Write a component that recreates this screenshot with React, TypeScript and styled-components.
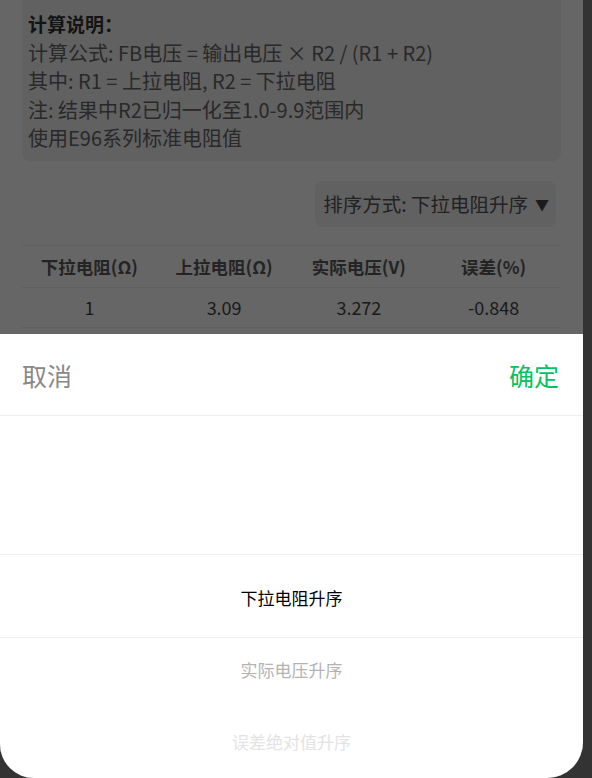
import React from "react";
import styled, { createGlobalStyle } from "styled-components";

const GlobalStyle = createGlobalStyle`
  html, body {
    margin: 0;
    padding: 0;
    background: #333;
  }
  body {
    font-family: "Noto Sans CJK SC", "Noto Sans", "Liberation Sans", sans-serif;
  }
  * {
    box-sizing: border-box;
  }
`;

const notes = [
  "计算公式: FB电压 = 输出电压 × R2 / (R1 + R2)",
  "其中: R1 = 上拉电阻, R2 = 下拉电阻",
  "注: 结果中R2已归一化至1.0-9.9范围内",
  "使用E96系列标准电阻值",
];

const columns = ["下拉电阻(Ω)", "上拉电阻(Ω)", "实际电压(V)", "误差(%)"];
const rows = [
  ["1", "3.09", "3.272", "-0.848"],
  ["1.02", "3.16", "3.284", "-0.485"],
];

const options = ["下拉电阻升序", "实际电压升序", "误差绝对值升序"];

export default function App() {
  return (
    <>
      <GlobalStyle />
      <Frame>
        {/* страница прокручена на несколько пикселей */}
        <Page>
          <InfoBox>
            <InfoTitle>计算说明：</InfoTitle>
            {notes.map((n) => (
              <InfoLine key={n}>{n}</InfoLine>
            ))}
          </InfoBox>

          <SortRow>
            <SortButton>
              排序方式: 下拉电阻升序 <Caret>▼</Caret>
            </SortButton>
          </SortRow>

          <Table>
            <HeadRow>
              {columns.map((c) => (
                <HeadCell key={c}>{c}</HeadCell>
              ))}
            </HeadRow>
            {rows.map((r, i) => (
              <Row key={i}>
                {r.map((v, j) => (
                  <Cell key={j}>{v}</Cell>
                ))}
              </Row>
            ))}
          </Table>
        </Page>

        <Mask />

        <Sheet>
          <SheetHeader>
            <Cancel>取消</Cancel>
            <Confirm>确定</Confirm>
          </SheetHeader>
          <Picker>
            <Indicator />
            <OptionList>
              {options.map((o, i) => (
                <Option key={o} $distance={i}>
                  {o}
                </Option>
              ))}
            </OptionList>
          </Picker>
        </Sheet>
      </Frame>
    </>
  );
}

const Frame = styled.div`
  position: relative;
  width: 583px;
  height: 778px;
  overflow: hidden;
  background: #fff;
  border-radius: 0 0 36px 34px;
`;

const Page = styled.div`
  margin-top: -8px;
  padding: 0 22px;
`;

const InfoBox = styled.div`
  background: #f3f3f3;
  border-radius: 8px;
  padding: 18px 6px 8px;
`;

const InfoTitle = styled.div`
  font-size: 19px;
  font-weight: 700;
  line-height: 28.5px;
  color: #333;
`;

const InfoLine = styled.div`
  font-size: 20px;
  line-height: 28.5px;
  color: #666;
  white-space: nowrap;
`;

const SortRow = styled.div`
  display: flex;
  justify-content: flex-end;
  margin-top: 20px;
  padding-right: 5px;
`;

const SortButton = styled.div`
  display: flex;
  align-items: center;
  gap: 7px;
  height: 46px;
  padding: 0 7px 0 8px;
  background: #f3f3f3;
  border-radius: 8px;
  font-size: 19.5px;
  color: #555;
  white-space: nowrap;
`;

const Caret = styled.span`
  font-size: 14px;
  color: #444;
`;

const Table = styled.div`
  margin-top: 18px;
  border-top: 1px solid #eee;
`;

const HeadRow = styled.div`
  display: grid;
  grid-template-columns: repeat(4, 1fr);
  height: 42px;
  align-items: center;
  border-bottom: 1px solid #eee;
`;

const Row = styled(HeadRow)`
  height: 40px;
`;

const HeadCell = styled.div`
  text-align: center;
  font-size: 17.5px;
  font-weight: 700;
  color: #5a5a5a;
`;

const Cell = styled.div`
  text-align: center;
  font-size: 18px;
  color: #444;
`;

const Mask = styled.div`
  position: absolute;
  inset: 0;
  background: rgba(0, 0, 0, 0.6);
`;

const Sheet = styled.div`
  position: absolute;
  left: 0;
  right: 0;
  bottom: 0;
  height: 444px;
  background: #fff;
  display: flex;
  flex-direction: column;
`;

const SheetHeader = styled.div`
  height: 82px;
  display: flex;
  align-items: center;
  justify-content: space-between;
  padding: 0 24px 0 22px;
  border-bottom: 1px solid #eee;
  font-size: 25px;
`;

const Cancel = styled.span`
  color: #888;
`;

const Confirm = styled.span`
  color: #07c160;
`;

const Picker = styled.div`
  position: relative;
  flex: 1;
  overflow: hidden;
`;

const Indicator = styled.div`
  position: absolute;
  left: 0;
  right: 0;
  top: 138px;
  height: 84px;
  border-top: 1px solid #eee;
  border-bottom: 1px solid #eee;
`;

const OptionList = styled.div`
  padding-top: 145px;
`;

const optionColors = ["#000", "#b3b3b3", "#e3e3e3"];

const Option = styled.div<{ $distance: number }>`
  height: 72px;
  display: flex;
  align-items: center;
  justify-content: center;
  font-size: 17px;
  color: ${(p) => optionColors[p.$distance] ?? "#eee"};
`;
